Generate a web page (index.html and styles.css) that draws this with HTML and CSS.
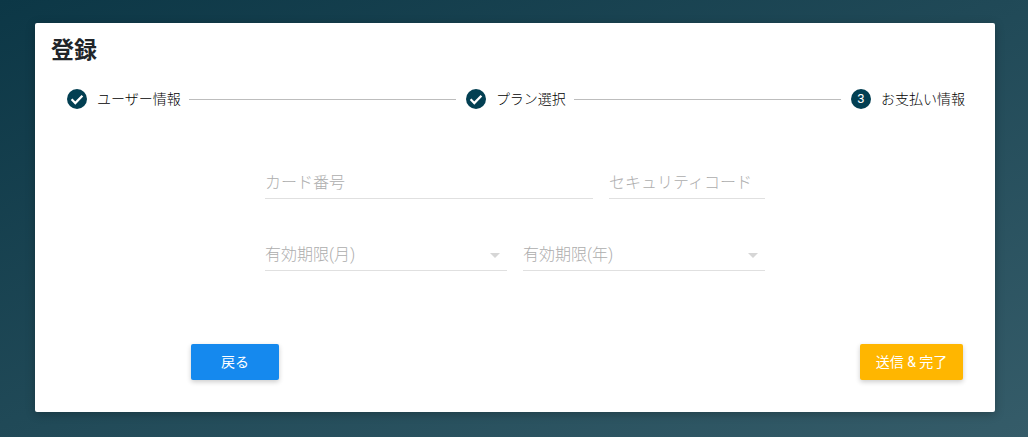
FILE: index.html
```html
<!DOCTYPE html>
<html lang="ja">
<head>
    <meta charset="UTF-8">
    <title>登録</title>
    <link rel="stylesheet" href="styles.css">
</head>
<body>
    <div class="card">
        <h1 class="title">登録</h1>

        <!-- ステッパー -->
        <div class="stepper">
            <div class="step">
                <svg class="step-icon" viewBox="0 0 20 20"><circle cx="10" cy="10" r="10" fill="#023f52"/><path d="M4.6 10.3l3.7 3.7 7.1-7.3" fill="none" stroke="#fff" stroke-width="2.3"/></svg>
                <span class="step-label">ユーザー情報</span>
            </div>
            <div class="step-line"></div>
            <div class="step">
                <svg class="step-icon" viewBox="0 0 20 20"><circle cx="10" cy="10" r="10" fill="#023f52"/><path d="M4.6 10.3l3.7 3.7 7.1-7.3" fill="none" stroke="#fff" stroke-width="2.3"/></svg>
                <span class="step-label">プラン選択</span>
            </div>
            <div class="step-line"></div>
            <div class="step">
                <span class="step-num">3</span>
                <span class="step-label">お支払い情報</span>
            </div>
        </div>

        <!-- 入力フォーム -->
        <div class="form">
            <div class="form-row">
                <div class="field field-wide"><span class="hint">カード番号</span></div>
                <div class="field field-code"><span class="hint">セキュリティコード</span></div>
            </div>
            <div class="form-row">
                <div class="field field-half"><span class="hint">有効期限(月)</span><span class="arrow"></span></div>
                <div class="field field-half"><span class="hint">有効期限(年)</span><span class="arrow"></span></div>
            </div>
        </div>

        <div class="actions">
            <button class="btn btn-back">戻る</button>
            <button class="btn btn-send">送信 &amp; 完了</button>
        </div>
    </div>
</body>
</html>
```

FILE: styles.css
```css
* {
    box-sizing: border-box;
}
body {
    margin: 0;
    width: 1028px;
    height: 437px;
    overflow: hidden;
    padding: 23px 33px 25px 35px;
    font-family: Roboto, "Noto Sans CJK JP", sans-serif;
    background: linear-gradient(to bottom right, #0c3746, #355c69);
}
.card {
    width: 960px;
    height: 389px;
    background-color: #fff;
    border-radius: 2px;
    box-shadow: 0 2px 10px rgba(0, 0, 0, 0.25);
    padding: 13px 30px 0 16px;
}
.title {
    margin: 0;
    font-size: 23px;
    line-height: 30px;
    font-weight: 700;
    color: #212529;
}
.stepper {
    display: flex;
    align-items: center;
    height: 24px;
    margin-top: 21px;
    padding-left: 16px;
}
.step {
    display: flex;
    align-items: center;
}
.step-icon, .step-num {
    width: 20px;
    height: 20px;
    flex: none;
}
.step-num {
    border-radius: 50%;
    background-color: #023f52;
    color: #fff;
    font-size: 13px;
    line-height: 20px;
    text-align: center;
}
.step-label {
    margin: 0 0 2px 10px;
    font-size: 14px;
    font-weight: 300;
    color: #000;
}
.step-line {
    flex: 1;
    height: 1px;
    margin: 0 10px 0 8px;
    background-color: #bdbdbd;
}
.form {
    width: 500px;
    margin: 52px 0 0 214px;
}
.form-row {
    display: flex;
    justify-content: space-between;
    margin-bottom: 36px;
}
.field {
    display: flex;
    align-items: center;
    justify-content: space-between;
    height: 36px;
    padding-top: 1px;
    border-bottom: 1px solid #e0e0e0;
}
.field-wide {
    width: 328px;
}
.field-code {
    width: 156px;
}
.field-half {
    width: 242px;
}
.hint {
    font-size: 16px;
    font-weight: 300;
    color: #adadad;
}
.arrow {
    width: 0;
    height: 0;
    margin: 4px 7px 0 0;
    border-left: 5px solid transparent;
    border-right: 5px solid transparent;
    border-top: 5px solid #d6d6d6;
}
.actions {
    display: flex;
    justify-content: space-between;
    margin: 73px 2px 0 140px;
}
.btn {
    height: 36px;
    padding-bottom: 3px;
    border: none;
    border-radius: 2px;
    color: #fff;
    font-family: inherit;
    font-size: 14px;
    box-shadow: 0 2px 5px rgba(0, 0, 0, 0.2);
}
.btn-back {
    width: 88px;
    background-color: #1589ee;
}
.btn-send {
    width: 103px;
    background-color: #ffb600;
}
```
